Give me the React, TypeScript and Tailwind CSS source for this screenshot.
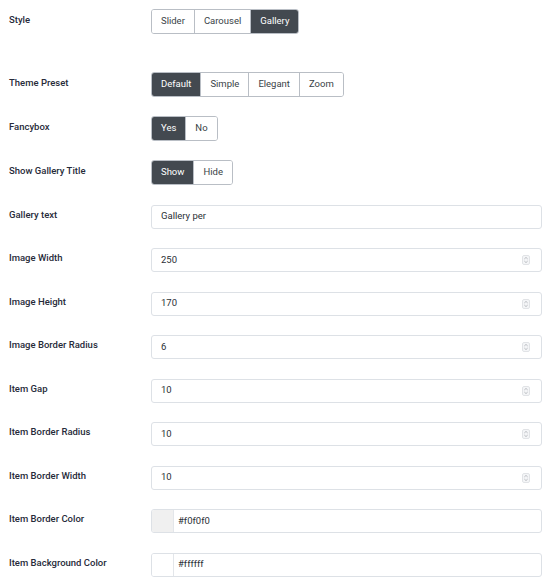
import React from "react";

const font = { fontFamily: "Roboto, 'Liberation Sans', sans-serif" };

function Segmented({ items, active }: { items: string[]; active: number }) {
  return (
    <div className="flex h-[25px] rounded-[3px] border border-[#b9bec5] overflow-hidden">
      {items.map((it, i) => (
        <div
          key={it}
          className={`flex items-center px-[9px] text-[9.5px] ${i > 0 ? "border-l border-[#b9bec5]" : ""} ${
            i === active ? "bg-[#434950] text-white" : "bg-white text-[#3a3f47]"
          }`}
        >
          {it}
        </div>
      ))}
    </div>
  );
}

function Label({ children }: { children: React.ReactNode }) {
  return (
    <div className="w-[151px] shrink-0 pl-[9px] text-[9.5px] font-medium text-[#272b3a] -mt-[3px]">{children}</div>
  );
}

function Spinner() {
  return (
    <svg width="8" height="10" viewBox="0 0 8 10" className="shrink-0">
      <rect x="0.5" y="0.5" width="7" height="9" rx="1.5" fill="#f4f5f7" stroke="#e1e3e6" />
      <path d="M2.3 4 L4 2.4 L5.7 4" fill="none" stroke="#a9adb3" strokeWidth="0.8" />
      <path d="M2.3 6 L4 7.6 L5.7 6" fill="none" stroke="#a9adb3" strokeWidth="0.8" />
    </svg>
  );
}

function InputRow({ label, value, number }: { label: string; value: string; number?: boolean }) {
  return (
    <div className="flex items-center mt-[19.5px]">
      <Label>{label}</Label>
      <div className="flex items-center w-[391px] h-[24px] rounded-[3px] border border-[#dde1e6] bg-white pl-[9px] pr-[11px]">
        <span className="flex-1 text-[9.5px] text-[#2b2f36]">{value}</span>
        {number && <Spinner />}
      </div>
    </div>
  );
}

function ColorRow({ label, value, swatch }: { label: string; value: string; swatch: string }) {
  return (
    <div className="flex items-center mt-[19.5px]">
      <Label>{label}</Label>
      <div className="flex items-center w-[391px] h-[24px] rounded-[3px] border border-[#dde1e6] bg-white overflow-hidden">
        <div className="w-[22px] h-full border-r border-[#e3e6ea]" style={{ background: swatch }} />
        <span className="pl-[4px] text-[9.5px] text-[#2b2f36]">{value}</span>
      </div>
    </div>
  );
}

export default function App() {
  return (
    <div className="w-[550px] h-[586px] bg-white overflow-hidden" style={font}>
      <div className="flex flex-col pt-[9px]">
        <div className="flex items-center">
          <Label>Style</Label>
          <Segmented items={["Slider", "Carousel", "Gallery"]} active={2} />
        </div>
        <div className="flex items-center mt-[38px]">
          <Label>Theme Preset</Label>
          <Segmented items={["Default", "Simple", "Elegant", "Zoom"]} active={0} />
        </div>
        <div className="flex items-center mt-[19px]">
          <Label>Fancybox</Label>
          <Segmented items={["Yes", "No"]} active={0} />
        </div>
        <div className="flex items-center mt-[19px]">
          <Label>Show Gallery Title</Label>
          <Segmented items={["Show", "Hide"]} active={0} />
        </div>
        <InputRow label="Gallery text" value="Gallery per" />
        <InputRow label="Image Width" value="250" number />
        <InputRow label="Image Height" value="170" number />
        <InputRow label="Image Border Radius" value="6" number />
        <InputRow label="Item Gap" value="10" number />
        <InputRow label="Item Border Radius" value="10" number />
        <InputRow label="Item Border Width" value="10" number />
        <ColorRow label="Item Border Color" value="#f0f0f0" swatch="#f0f0f0" />
        <ColorRow label="Item Background Color" value="#ffffff" swatch="#ffffff" />
      </div>
    </div>
  );
}
